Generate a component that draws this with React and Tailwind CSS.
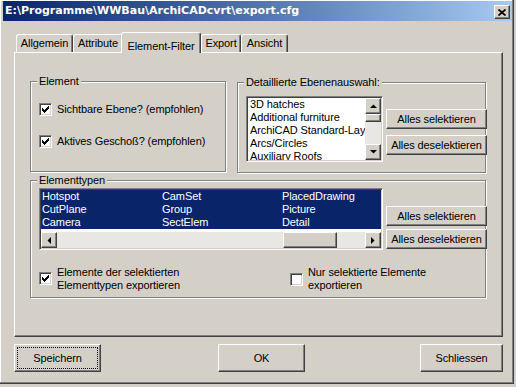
import React from "react";

const raised =
  "border border-t-white border-l-white border-r-[#404040] border-b-[#404040] shadow-[inset_-1px_-1px_0_#808080] bg-[#d4d0c8]";
const sunken =
  "border border-t-[#808080] border-l-[#808080] border-r-white border-b-white shadow-[inset_1px_1px_0_#404040,inset_-1px_-1px_0_#d4d0c8] p-px";

function Arrow({ dir }) {
  const pts = {
    up: "0,4 7,4 3.5,0.5",
    down: "0,0 7,0 3.5,3.5",
    left: "4,0 4,7 0.5,3.5",
    right: "0,0 0,7 3.5,3.5",
  }[dir];
  const horiz = dir === "left" || dir === "right";
  return (
    <svg width={horiz ? 4 : 7} height={horiz ? 7 : 4} viewBox={horiz ? "0 0 4 7" : "0 0 7 4"}>
      <polygon points={pts} fill="#000" />
    </svg>
  );
}

function ScrollBtn({ dir }) {
  return (
    <div className={`${raised} w-[16px] h-[16px] shrink-0 flex items-center justify-center`}>
      <Arrow dir={dir} />
    </div>
  );
}

function Button({ children, className = "", focus }) {
  return (
    <div className={`${raised} relative flex items-center justify-center ${className}`}>
      {focus && <div className="absolute inset-[2px] border border-dotted border-black" />}
      <span>{children}</span>
    </div>
  );
}

function Check({ checked }) {
  return (
    <div className="w-[13px] h-[13px] shrink-0 bg-white border border-t-[#808080] border-l-[#808080] border-r-white border-b-white shadow-[inset_1px_1px_0_#404040,inset_-1px_-1px_0_#d4d0c8] p-[2px]">
      {checked && (
        <svg width="7" height="7" viewBox="0 0 7 7" className="block" shapeRendering="crispEdges">
          <path
            d="M0 2h1v3h-1zM1 3h1v3h-1zM2 4h1v3h-1zM3 3h1v3h-1zM4 2h1v3h-1zM5 1h1v3h-1zM6 0h1v3h-1z"
            fill="#000"
          />
        </svg>
      )}
    </div>
  );
}

function Group({ label, className = "", children }) {
  return (
    <div className={`relative border border-[#808080] shadow-[inset_1px_1px_0_white,1px_1px_0_white] ${className}`}>
      <span className="absolute -top-[7px] left-[6px] px-[2px] bg-[#d4d0c8] leading-[13px] whitespace-nowrap">
        {label}
      </span>
      {children}
    </div>
  );
}

function Tab({ label, w, selected }) {
  if (selected) {
    return (
      <div
        className={`${w} relative z-10 -ml-[2px] h-[21px] bg-[#d4d0c8] border-t border-l border-r border-t-white border-l-white border-r-[#404040] shadow-[inset_-1px_0_0_#808080] rounded-t-[3px] flex items-start justify-center pt-[5px]`}
      >
        {label}
      </div>
    );
  }
  return (
    <div
      className={`${w} mt-[2px] h-[18px] border-t border-l border-r border-t-white border-l-white border-r-[#404040] shadow-[inset_-1px_0_0_#808080] rounded-t-[3px] flex items-center justify-center`}
    >
      {label}
    </div>
  );
}

const layers = ["3D hatches", "Additional furniture", "ArchiCAD Standard-Layer", "Arcs/Circles", "Auxiliary Roofs"];
const types = [
  ["Hotspot", "CamSet", "PlacedDrawing"],
  ["CutPlane", "Group", "Picture"],
  ["Camera", "SectElem", "Detail"],
];

export default function App() {
  return (
    <div className="w-[516px] h-[387px] bg-[#d4d0c8] font-['Liberation_Sans',Arial,sans-serif] text-[11px] tracking-[-0.1px] text-black overflow-hidden select-none">
      <div className="w-[514px] h-[384px] border-r border-b border-[#404040] shadow-[inset_-1px_-1px_0_#808080,inset_1px_1px_0_white] pl-[3px] pr-[1px] pt-[1px]">
        {/* title bar */}
        <div className="h-[20px] flex items-center pl-[2px] pr-[2px] bg-gradient-to-r from-[#0a246a] to-[#a6caf0]">
          <span className="text-white font-bold tracking-normal font-['DejaVu_Sans',sans-serif] text-[11px]">
            E:\Programme\WWBau\ArchiCADcvrt\export.cfg
          </span>
          <div className={`${raised} ml-auto mt-[2px] w-[16px] h-[14px] flex items-center justify-center`}>
            <svg width="8" height="7" viewBox="0 0 8 7">
              <path d="M0.5 0.5L7.5 6.5M7.5 0.5L0.5 6.5" stroke="#000" strokeWidth="1.7" />
            </svg>
          </div>
        </div>

        <div className="ml-[11px] w-[489px] mt-[11px]">
          {/* tabs */}
          <div className="flex items-start h-[20px] pl-[2px]">
            <Tab label="Allgemein" w="w-[57px]" />
            <Tab label="Attribute" w="w-[50px]" />
            <Tab label="Element-Filter" w="w-[80px]" selected />
            <Tab label="Export" w="w-[40px]" />
            <Tab label="Ansicht" w="w-[47px]" />
          </div>

          {/* tab page */}
          <div className="h-[285px] border border-t-white border-l-white border-r-[#404040] border-b-[#404040] shadow-[inset_-1px_-1px_0_#808080] pl-[15px] pt-[28px]">
            <div className="flex items-start">
              <Group label="Element" className="w-[196px] h-[91px]">
                <div className="pl-[8px] pt-[21px]">
                  <div className="flex items-center gap-[5px] h-[13px]">
                    <Check checked />
                    <span>Sichtbare Ebene? (empfohlen)</span>
                  </div>
                  <div className="flex items-center gap-[5px] h-[13px] mt-[19px]">
                    <Check checked />
                    <span>Aktives Geschoß? (empfohlen)</span>
                  </div>
                </div>
              </Group>

              <Group label="Detaillierte Ebenenauswahl:" className="ml-[11px] mt-[1px] w-[249px] h-[91px]">
                <div className="flex pl-[8px] pt-[13px]">
                  <div className={`${sunken} w-[137px] h-[66px] bg-white flex`}>
                    <div className="flex-1 overflow-hidden pl-[2px]">
                      {layers.map((l) => (
                        <div key={l} className="h-[13px] leading-[13px] whitespace-nowrap">
                          {l}
                        </div>
                      ))}
                    </div>
                    <div className="w-[16px] flex flex-col bg-[#e9e7e3]">
                      <ScrollBtn dir="up" />
                      <div className={`${raised} h-[8px]`} />
                      <div className="flex-1" />
                      <ScrollBtn dir="down" />
                    </div>
                  </div>
                  <div className="flex flex-col ml-[3px]">
                    <Button className="w-[101px] h-[20px] mt-[13px]">Alles selektieren</Button>
                    <Button className="w-[101px] h-[20px] mt-[6px]">Alles deselektieren</Button>
                  </div>
                </div>
              </Group>
            </div>

            <Group label="Elementtypen" className="mt-[7px] w-[456px] h-[118px]">
              <div className="flex pl-[8px] pt-[7px]">
                <div className={`${sunken} w-[344px] h-[62px] bg-white flex flex-col`}>
                  <div className="h-[39px] overflow-hidden bg-[#0a246a] text-white">
                    {types.map((row) => (
                      <div key={row[0]} className="flex h-[13px] leading-[13px]">
                        {row.map((c) => (
                          <div key={c} className="w-[120px] shrink-0 pl-[1px] whitespace-nowrap">
                            {c}
                          </div>
                        ))}
                      </div>
                    ))}
                  </div>
                  <div className="h-[3px]" />
                  <div className="h-[16px] flex bg-[#e9e7e3]">
                    <ScrollBtn dir="left" />
                    <div className="flex-1 flex">
                      <div className={`${raised} ml-[226px] w-[54px] h-[16px]`} />
                    </div>
                    <ScrollBtn dir="right" />
                  </div>
                </div>
                <div className="flex flex-col ml-[3px]">
                  <Button className="w-[101px] h-[20px] mt-[18px]">Alles selektieren</Button>
                  <Button className="w-[101px] h-[20px] mt-[3px]">Alles deselektieren</Button>
                </div>
              </div>
              <div className="flex items-center pl-[8px] mt-[15px]">
                <div className="w-[251px] flex items-center gap-[5px]">
                  <Check checked />
                  <span className="leading-[13px]">
                    Elemente der selektierten
                    <br />
                    Elementtypen exportieren
                  </span>
                </div>
                <div className="flex items-center gap-[5px] mt-[1px]">
                  <Check />
                  <span className="leading-[13px]">
                    Nur selektierte Elemente
                    <br />
                    exportieren
                  </span>
                </div>
              </div>
            </Group>
          </div>

          {/* dialog buttons */}
          <div className="flex mt-[7px]">
            <Button focus className="w-[87px] h-[28px]">
              Speichern
            </Button>
            <Button className="ml-[117px] w-[87px] h-[28px]">OK</Button>
            <Button className="ml-[115px] w-[83px] h-[28px]">Schliessen</Button>
          </div>
        </div>
      </div>
    </div>
  );
}
